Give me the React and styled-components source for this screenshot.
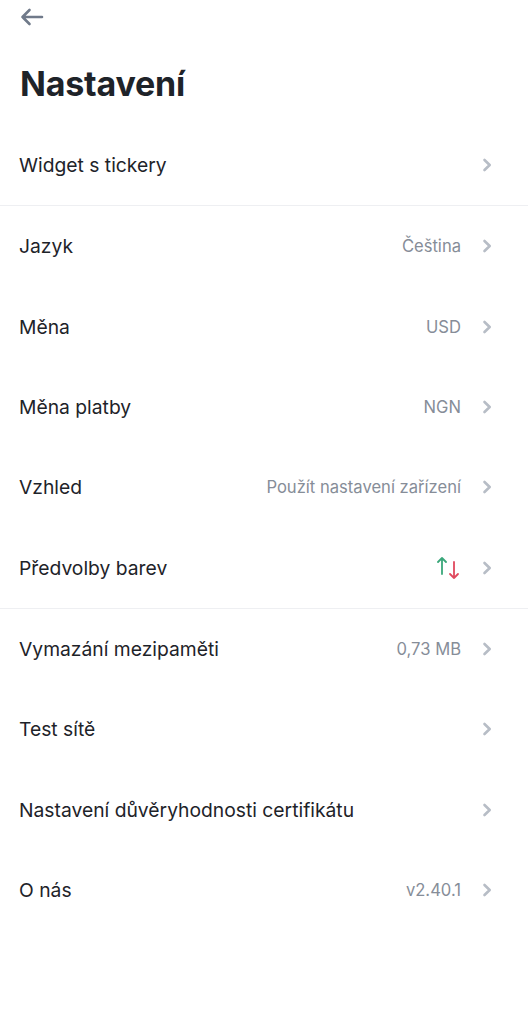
import styled, { createGlobalStyle } from "styled-components"

const Global = createGlobalStyle`
  html, body {
    margin: 0;
    padding: 0;
    background: #ffffff;
  }
  body {
    font-family: Inter, "Noto Sans", "Liberation Sans", sans-serif;
    color: #1e2329;
    -webkit-font-smoothing: antialiased;
  }
`

const Page = styled.div`
  width: 528px;
  min-height: 1024px;
  background: #fff;
`

const TopBar = styled.div`
  height: 34px;
  display: flex;
  align-items: center;
  padding: 0 19px;
`

const BackButton = styled.button`
  border: 0;
  background: none;
  padding: 0;
  display: flex;
  color: #707a8a;
  cursor: pointer;
`

const Title = styled.h1`
  margin: 0;
  padding: 29px 20px 0;
  height: 91px;
  box-sizing: border-box;
  font-size: 34px;
  font-weight: 700;
  letter-spacing: -0.2px;
  color: #1e2329;
`

const Group = styled.div`
  & + & {
    border-top: 1px solid #eeeff2;
  }
`

const Row = styled.div`
  height: 80.3px;
  display: flex;
  align-items: center;
  padding: 0 36px 0 19px;
  cursor: pointer;
`

const Label = styled.span`
  flex: 1;
  font-size: 19.3px;
  font-weight: 400;
  color: #1e2329;
`

const Value = styled.span`
  font-size: 16.6px;
  color: #868d98;
  margin-right: 21px;
  display: flex;
  align-items: center;
`

const Chevron = () => (
  <svg width="10" height="14" viewBox="0 0 10 14" fill="none">
    <path d="M2.5 2l5.2 5-5.2 5" stroke="#b7bdc6" strokeWidth="2.6" strokeLinecap="round" strokeLinejoin="round" />
  </svg>
)

const ColorArrows = () => (
  <svg width="24" height="26" viewBox="0 0 24 26" fill="none">
    <path d="M5 19V3M1 7l4-4 4 4" stroke="#3aa77a" strokeWidth="1.8" strokeLinecap="round" strokeLinejoin="round" />
    <path d="M17 7v16M13 19l4 4 4-4" stroke="#e0495e" strokeWidth="1.8" strokeLinecap="round" strokeLinejoin="round" />
  </svg>
)

const groups = [
  [{ label: "Widget s tickery" }],
  [
    { label: "Jazyk", value: "Čeština" },
    { label: "Měna", value: "USD" },
    { label: "Měna platby", value: "NGN" },
    { label: "Vzhled", value: "Použít nastavení zařízení" },
    { label: "Předvolby barev", value: <ColorArrows /> },
  ],
  [
    { label: "Vymazání mezipaměti", value: "0,73 MB" },
    { label: "Test sítě" },
    { label: "Nastavení důvěryhodnosti certifikátu" },
    { label: "O nás", value: "v2.40.1" },
  ],
]

export default function App() {
  return (
    <Page>
      <Global />
      <TopBar>
        <BackButton aria-label="Zpět">
          <svg width="26" height="24" viewBox="0 0 26 24" fill="none">
            <path d="M23 12H3.5M10.5 5L3.5 12l7 7" stroke="currentColor" strokeWidth="2.6" strokeLinecap="round" strokeLinejoin="round" />
          </svg>
        </BackButton>
      </TopBar>
      <Title>Nastavení</Title>
      {groups.map((rows, g) => (
        <Group key={g}>
          {rows.map((r) => (
            <Row key={r.label}>
              <Label>{r.label}</Label>
              {r.value && <Value>{r.value}</Value>}
              <Chevron />
            </Row>
          ))}
        </Group>
      ))}
    </Page>
  )
}
